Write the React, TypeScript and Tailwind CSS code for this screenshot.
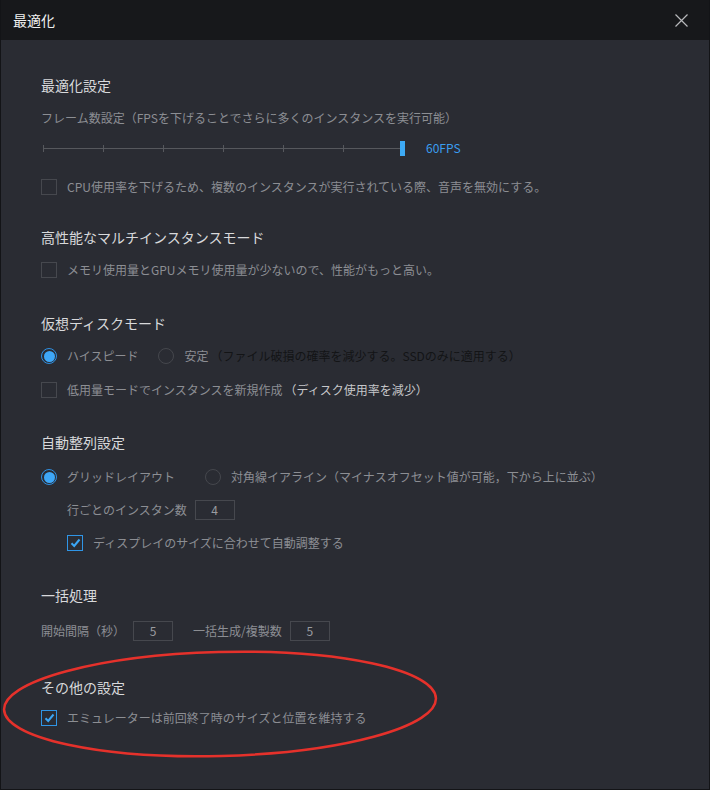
import React from "react";

const FONT = "font-['Noto_Sans_CJK_JP','Noto_Sans',sans-serif]";

const CheckBox = ({ checked }: { checked?: boolean }) => (
  <span
    className={`flex h-[16px] w-[16px] shrink-0 items-center justify-center border ${
      checked ? "border-[#2f95e6]" : "border-[#46484e]"
    }`}
  >
    {checked && (
      <svg width="11" height="10" viewBox="0 0 11 10">
        <path d="M1.5 5.2 L4.2 8 L9.5 1.5" fill="none" stroke="#3ba6f5" strokeWidth="2" />
      </svg>
    )}
  </span>
);

const Radio = ({ checked }: { checked?: boolean }) =>
  checked ? (
    <span className="flex h-[16px] w-[16px] shrink-0 items-center justify-center rounded-full border-[1.5px] border-[#2f8fe0]">
      <span className="h-[11px] w-[11px] rounded-full bg-[#3ea7f7]" />
    </span>
  ) : (
    <span className="block h-[16px] w-[16px] shrink-0 rounded-full border border-[#45474d]" />
  );

const NumBox = ({ value }: { value: string }) => (
  <span className="flex h-[20px] w-[40px] items-center justify-center border border-[#46484e] text-[12px] text-[#9a9ca1]">
    {value}
  </span>
);

const Title = ({ children, className = "" }: { children: React.ReactNode; className?: string }) => (
  <div className={`flex h-[24px] items-center text-[14px] text-[#d8d9db] ${className}`}>{children}</div>
);

const Row = ({ children, className = "" }: { children: React.ReactNode; className?: string }) => (
  <div className={`flex h-[20px] items-center text-[12px] text-[#8c8e93] ${className}`}>{children}</div>
);

const Slider = () => {
  const ticks = [0, 60, 120, 180, 240, 300];
  return (
    <div className="relative h-[20px] w-[364px]">
      <div className="absolute left-[2px] top-[10px] h-px w-[358px] bg-[#56585d]" />
      {ticks.map((t) => (
        <div
          key={t}
          className="absolute top-[7px] h-[7px] w-px bg-[#56585d]"
          style={{ left: t + 2 }}
        />
      ))}
      <div className="absolute left-[359px] top-[3px] h-[15px] w-[5px] bg-[#3daaf5]" />
    </div>
  );
};

export default function App() {
  return (
    <div
      className={`relative flex h-[790px] w-[710px] flex-col overflow-hidden border-x border-b border-[#131417] bg-[#2a2c33] ${FONT}`}
    >
      <div className="flex h-[40px] shrink-0 items-center justify-between bg-[#17181b] pl-[12px] pr-[21px]">
        <span className="text-[14px] text-[#f0f0f0]">最適化</span>
        <svg width="13" height="13" viewBox="0 0 13 13">
          <path d="M0.5 0.5 L12.5 12.5 M12.5 0.5 L0.5 12.5" stroke="#b8b9bc" strokeWidth="1.2" />
        </svg>
      </div>

      <div className="flex flex-col pl-[40px] pt-[33px]">
        <Title>最適化設定</Title>
        <Row className="mt-[11px]">フレーム数設定（FPSを下げることでさらに多くのインスタンスを実行可能）</Row>
        <div className="mt-[10px] flex h-[20px] items-center">
          <Slider />
          <span className="ml-[21px] text-[12px] text-[#3a9ef0]">60FPS</span>
        </div>
        <Row className="mt-[19px]">
          <CheckBox />
          <span className="ml-[10px]">CPU使用率を下げるため、複数のインスタンスが実行されている際、音声を無効にする。</span>
        </Row>

        <Title className="mt-[28px]">高性能なマルチインスタンスモード</Title>
        <Row className="mt-[11px]">
          <CheckBox />
          <span className="ml-[10px]">メモリ使用量とGPUメモリ使用量が少ないので、性能がもっと高い。</span>
        </Row>

        <Title className="mt-[31px]">仮想ディスクモード</Title>
        <Row className="mt-[11px]">
          <Radio checked />
          <span className="ml-[10px]">ハイスピード</span>
          <span className="ml-[20px]">
            <Radio />
          </span>
          <span className="ml-[10px]">安定</span>
          <span className="ml-[2px] text-[#131416]">（ファイル破損の確率を減少する。SSDのみに適用する）</span>
        </Row>
        <Row className="mt-[14px]">
          <CheckBox />
          <span className="ml-[10px]">低用量モードでインスタンスを新規作成</span>
          <span className="ml-[2px] text-[#c6c7ca]">（ディスク使用率を減少）</span>
        </Row>

        <Title className="mt-[30px]">自動整列設定</Title>
        <Row className="mt-[13px]">
          <Radio checked />
          <span className="ml-[10px] w-[138px]">グリッドレイアウト</span>
          <Radio />
          <span className="ml-[10px]">対角線イアライン（マイナスオフセット値が可能，下から上に並ぶ）</span>
        </Row>
        <Row className="mt-[13px] pl-[26px]">
          <span>行ごとのインスタン数</span>
          <span className="ml-[8px]">
            <NumBox value="4" />
          </span>
        </Row>
        <Row className="mt-[13px] pl-[26px]">
          <CheckBox checked />
          <span className="ml-[10px]">ディスプレイのサイズに合わせて自動調整する</span>
        </Row>

        <Title className="mt-[30px]">一括処理</Title>
        <Row className="mt-[14px]">
          <span>開始間隔（秒）</span>
          <span className="ml-[8px]">
            <NumBox value="5" />
          </span>
          <span className="ml-[20px]">一括生成/複製数</span>
          <span className="ml-[8px]">
            <NumBox value="5" />
          </span>
        </Row>

        <Title className="mt-[34px]">その他の設定</Title>
        <Row className="mt-[9px]">
          <CheckBox checked />
          <span className="ml-[10px]">エミュレーターは前回終了時のサイズと位置を維持する</span>
        </Row>
      </div>

      <svg className="pointer-events-none absolute left-0 top-0" width="710" height="790">
        <ellipse
          cx="219"
          cy="704"
          rx="216"
          ry="52"
          transform="rotate(-1.5 219 704)"
          fill="none"
          stroke="#e5312b"
          strokeWidth="2.5"
        />
      </svg>
    </div>
  );
}
